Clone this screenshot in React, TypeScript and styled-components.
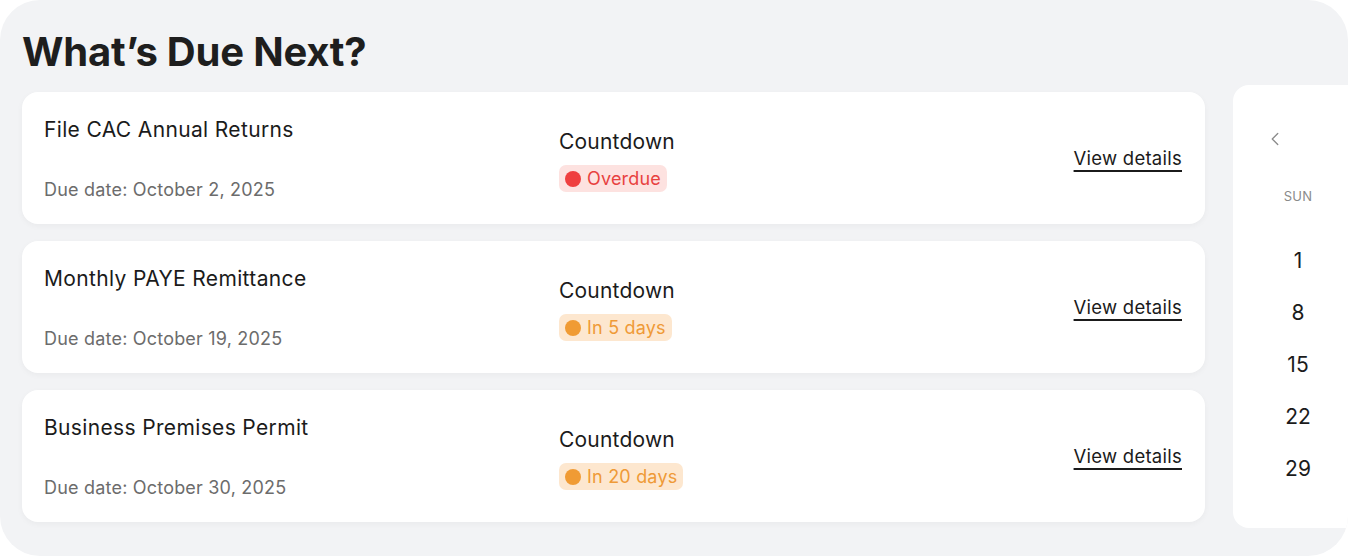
import React from "react";
import styled, { createGlobalStyle } from "styled-components";
import { ChevronLeft } from "lucide-react";

const GlobalStyle = createGlobalStyle`
  html, body {
    margin: 0;
    padding: 0;
    background: #ffffff;
  }
  * {
    box-sizing: border-box;
  }
`;

type Tone = "danger" | "warning";

interface Task {
  title: string;
  due: string;
  status: string;
  tone: Tone;
}

const tasks: Task[] = [
  { title: "File CAC Annual Returns", due: "October 2, 2025", status: "Overdue", tone: "danger" },
  { title: "Monthly PAYE Remittance", due: "October 19, 2025", status: "In 5 days", tone: "warning" },
  { title: "Business Premises Permit", due: "October 30, 2025", status: "In 20 days", tone: "warning" },
];

const tones = {
  danger: { bg: "#fde2e0", fg: "#e8413f", dot: "#ef3f3f" },
  warning: { bg: "#fde7cf", fg: "#ef9a37", dot: "#f09b34" },
};

const Panel = styled.section`
  width: 1348px;
  height: 556px;
  background: #f2f3f5;
  border-radius: 40px;
  overflow: hidden;
  padding: 28px 0 0 22px;
  font-family: Inter, "Liberation Sans", sans-serif;
  color: #1c1c1c;
`;

const Title = styled.h2`
  margin: 0 0 16px;
  font-size: 40px;
  line-height: 48px;
  font-weight: 700;
  letter-spacing: -0.2px;
  color: #1e1e1e;
`;

const Body = styled.div`
  display: flex;
  align-items: flex-start;
  gap: 28px;
`;

const List = styled.div`
  flex: 0 0 1183px;
  display: flex;
  flex-direction: column;
  gap: 17px;
`;

const Card = styled.article`
  height: 132px;
  background: #ffffff;
  border-radius: 16px;
  box-shadow: 0 2px 6px rgba(0, 0, 0, 0.04);
  display: grid;
  grid-template-columns: 515px 1fr auto;
  align-items: center;
  padding: 0 23px 0 22px;
`;

const Info = styled.div`
  height: 100%;
  display: flex;
  flex-direction: column;
  justify-content: space-between;
  padding: 25px 0 22px;
`;

const TaskName = styled.div`
  font-size: 21px;
  line-height: 26px;
  letter-spacing: 0.35px;
  color: #1b1b1b;
`;

const DueDate = styled.div`
  font-size: 18px;
  line-height: 24px;
  letter-spacing: 0.2px;
  color: #6c6c6c;
`;

const Countdown = styled.div`
  display: flex;
  flex-direction: column;
  align-items: flex-start;
  gap: 10px;
  padding-top: 5px;
`;

const CountLabel = styled.div`
  font-size: 21px;
  line-height: 26px;
  letter-spacing: 0.2px;
  color: #1b1b1b;
`;

const Badge = styled.span<{ $tone: Tone }>`
  display: inline-flex;
  align-items: center;
  gap: 6px;
  height: 27px;
  padding: 0 6px;
  border-radius: 7px;
  background: ${(p) => tones[p.$tone].bg};
  color: ${(p) => tones[p.$tone].fg};
  font-size: 18px;
  line-height: 27px;
  letter-spacing: 0.2px;
`;

const Dot = styled.span<{ $tone: Tone }>`
  width: 16px;
  height: 16px;
  border-radius: 50%;
  background: ${(p) => tones[p.$tone].dot};
`;

const DetailsLink = styled.a`
  font-size: 18.5px;
  line-height: 24px;
  letter-spacing: 0.25px;
  color: #1b1b1b;
  text-decoration: underline;
  text-underline-offset: 5px;
  text-decoration-thickness: 1.5px;
  cursor: pointer;
`;

const Calendar = styled.aside`
  flex: 0 0 200px;
  margin-top: -7px;
  height: 443px;
  background: #ffffff;
  border-radius: 16px;
  padding-top: 40px;
`;

const NavRow = styled.div`
  height: 28px;
  display: flex;
  align-items: center;
  padding-left: 31px;
  color: #8e8e8e;
`;

const DayColumn = styled.div`
  width: 130px;
  display: flex;
  flex-direction: column;
  align-items: center;
`;

const WeekDay = styled.div`
  margin: 34px 0 30px;
  font-size: 13px;
  line-height: 18px;
  color: #8a8a8a;
  letter-spacing: 0.3px;
`;

const DayNum = styled.div`
  font-size: 21px;
  line-height: 52px;
  color: #1b1b1b;
`;

export default function App() {
  return (
    <>
      <GlobalStyle />
      <Panel>
        <Title>What’s Due Next?</Title>
        <Body>
          <List>
            {tasks.map((t) => (
              <Card key={t.title}>
                <Info>
                  <TaskName>{t.title}</TaskName>
                  <DueDate>Due date: {t.due}</DueDate>
                </Info>
                <Countdown>
                  <CountLabel>Countdown</CountLabel>
                  <Badge $tone={t.tone}>
                    <Dot $tone={t.tone} />
                    {t.status}
                  </Badge>
                </Countdown>
                <DetailsLink>View details</DetailsLink>
              </Card>
            ))}
          </List>
          <Calendar>
            <NavRow>
              <ChevronLeft size={22} strokeWidth={1.5} />
            </NavRow>
            <DayColumn>
              <WeekDay>SUN</WeekDay>
              {[1, 8, 15, 22, 29].map((d) => (
                <DayNum key={d}>{d}</DayNum>
              ))}
            </DayColumn>
          </Calendar>
        </Body>
      </Panel>
    </>
  );
}
